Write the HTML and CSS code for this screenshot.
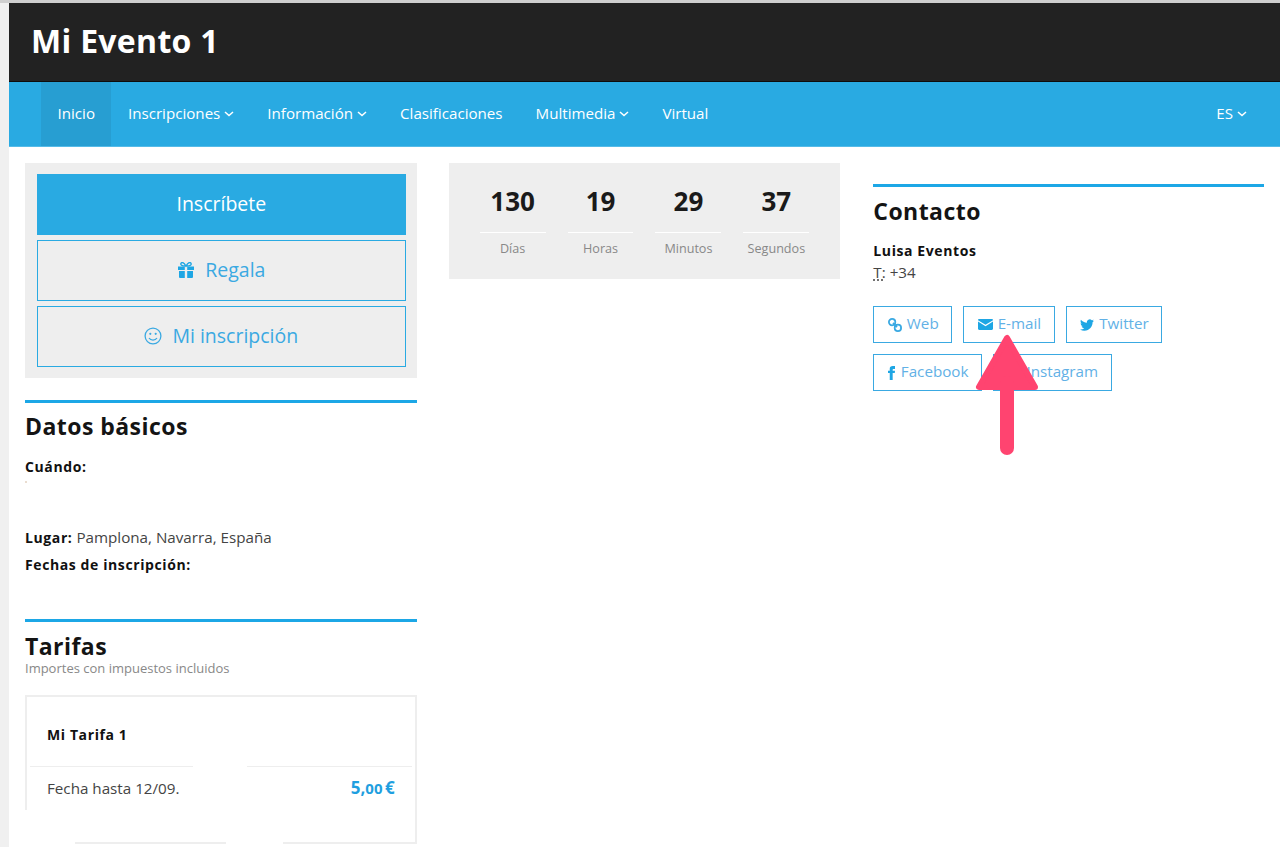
FILE: index.html
```html
<!DOCTYPE html>
<html lang="es">
<head>
<meta charset="utf-8">
<title>Mi Evento 1</title>
<link rel="stylesheet" href="styles.css">
</head>
<body>
<div class="page">
  <header class="masthead"><h1>Mi Evento 1</h1></header>
  <nav class="nav">
    <a class="nav-item active">Inicio</a>
    <a class="nav-item">Inscripciones<svg class="chev" viewBox="0 0 10 6"><path d="M1 1l4 3.6L9 1"/></svg></a>
    <a class="nav-item">Información<svg class="chev" viewBox="0 0 10 6"><path d="M1 1l4 3.6L9 1"/></svg></a>
    <a class="nav-item">Clasificaciones</a>
    <a class="nav-item">Multimedia<svg class="chev" viewBox="0 0 10 6"><path d="M1 1l4 3.6L9 1"/></svg></a>
    <a class="nav-item">Virtual</a>
    <a class="nav-item lang">ES<svg class="chev" viewBox="0 0 10 6"><path d="M1 1l4 3.6L9 1"/></svg></a>
  </nav>
  <main class="columns">
    <div class="col">
      <div class="actions">
        <a class="action primary">Inscríbete</a>
        <a class="action"><svg class="action-icon" viewBox="0 0 18 16"><path d="M1 4.500h6.800V8H1zM10.200 4.500H17V8h-6.800zM2 9h5.800v7H3a1 1 0 0 1-1-1zM10.200 9H16v6a1 1 0 0 1-1 1h-4.800z"/><path d="M9 4C7 .6 5.800.3 4.800.6 3.600 1 3.500 2.600 4.500 3.300 5.300 3.900 7 4 9 4c2 0 3.700-.1 4.500-.7 1-.7.9-2.300-.3-2.700C12.200.3 11 .6 9 4z" class="gift-bow"/></svg>Regala</a>
        <a class="action"><svg class="action-icon smile" viewBox="0 0 18 18"><circle cx="9" cy="9" r="7.900"/><path d="M5 11c1.800 2.700 6.200 2.700 8 0"/><circle class="eye" cx="6.300" cy="6.800" r="1.100"/><circle class="eye" cx="11.700" cy="6.800" r="1.100"/></svg>Mi inscripción</a>
      </div>
      <section class="block basics">
        <h2>Datos básicos</h2>
        <p class="when"><b>Cuándo:</b><i class="speck"></i></p>
        <p class="place"><b>Lugar:</b> Pamplona, Navarra, España</p>
        <p class="dates"><b>Fechas de inscripción:</b></p>
      </section>
      <section class="block rates">
        <h2>Tarifas</h2>
        <p class="note">Importes con impuestos incluidos</p>
        <div class="card">
          <div class="card-title">Mi Tarifa 1</div>
          <div class="card-row"><span>Fecha hasta 12/09.</span><span class="price">5,<small>00</small> €</span></div>
          <i class="mask mask-line"></i>
          <i class="mask mask-side"></i>
          <i class="mask mask-foot-a"></i>
          <i class="mask mask-foot-b"></i>
        </div>
      </section>
    </div>
    <div class="col">
      <div class="countdown">
        <div class="unit"><strong>130</strong><span>Días</span></div>
        <div class="unit"><strong>19</strong><span>Horas</span></div>
        <div class="unit"><strong>29</strong><span>Minutos</span></div>
        <div class="unit"><strong>37</strong><span>Segundos</span></div>
      </div>
    </div>
    <div class="col contact-col">
      <section class="block contact">
        <h2>Contacto</h2>
        <p class="org"><b>Luisa Eventos</b></p>
        <p class="phone"><abbr>T:</abbr> +34</p>
        <div class="links">
          <a class="link"><svg class="link-icon" viewBox="0 0 14 14"><g class="chain"><rect x="0.900" y="0.900" width="6.400" height="6.400" rx="3.200"/><rect x="6.700" y="6.700" width="6.400" height="6.400" rx="3.200"/><path d="M5 5l4 4"/></g></svg>Web</a>
          <a class="link"><svg class="link-icon mail" viewBox="0 0 14 11" preserveAspectRatio="none"><path d="M0 2.600V9.800C0 10.500.5 11 1.200 11h11.600c.7 0 1.200-.5 1.200-1.200V2.600L7 7.200zM1.200 0C.4 0 0 .5 0 1.200L7 5.800l7-4.600C14 .5 13.600 0 12.800 0z"/></svg>E-mail</a>
          <a class="link"><svg class="link-icon" viewBox="0 0 24 24"><path d="M23.953 4.570a10 10 0 0 1-2.825.775 4.958 4.958 0 0 0 2.163-2.723c-.951.555-2.005.959-3.127 1.184a4.920 4.920 0 0 0-8.384 4.482C7.690 8.095 4.067 6.130 1.640 3.162a4.822 4.822 0 0 0-.666 2.475c0 1.710.870 3.213 2.188 4.096a4.904 4.904 0 0 1-2.228-.616v.06a4.923 4.923 0 0 0 3.946 4.827 4.996 4.996 0 0 1-2.212.085 4.936 4.936 0 0 0 4.604 3.417 9.867 9.867 0 0 1-6.102 2.105c-.39 0-.779-.023-1.170-.067a13.995 13.995 0 0 0 7.557 2.209c9.053 0 13.998-7.496 13.998-13.985 0-.21 0-.42-.015-.63A9.935 9.935 0 0 0 24 4.590z"/></svg>Twitter</a>
          <a class="link"><svg class="link-icon fb" viewBox="6 0 12 24"><path d="M9 8H6v4h3v12h5V12h3.642L18 8h-4V6.333C14 5.378 14.192 5 15.115 5H18V0h-3.808C10.596 0 9 1.583 9 4.615V8z"/></svg>Facebook</a>
          <a class="link"><svg class="link-icon" viewBox="0 0 14 14"><rect x="1" y="1" width="12" height="12" rx="3" class="ig"/></svg>Instagram</a>
        </div>
      </section>
    </div>
  </main>
</div>
<svg class="arrow" viewBox="0 0 66 122" aria-hidden="true"><path d="M32 5L4 54h56z" class="arrow-head"/><path d="M32 50v65" class="arrow-shaft"/></svg>
</body>
</html>
```
FILE: styles.css
```css
* { box-sizing: border-box; }
html, body { margin: 0; height: 847px; overflow: hidden; }
body {
  position: relative;
  background: #f0f0f0;
  border-top: 3px solid #cfcfcf;
  padding-left: 9px;
  font-family: "Open Sans", "Noto Sans", sans-serif;
  font-size: 15.200px;
  line-height: 20px;
  color: #444;
}
.page { background: #fff; height: 844px; overflow: hidden; }
p { margin: 0; }
b { color: #111; font-weight: 700; font-size: 14px; letter-spacing: .6px; }

.masthead { height: 79px; background: #222; border-bottom: 1px solid #0d0d0d; padding: 0 22px; display: flex; align-items: center; }
.masthead h1 { margin: 0 0 2px; font-size: 32px; line-height: 40px; font-weight: 700; color: #fff; letter-spacing: .3px; }

.nav { height: 65px; background: #29aae2; border-bottom: 1px solid #55bbe8; padding: 0 32px; display: flex; }
.nav-item { display: flex; align-items: center; padding: 0 16.500px 2px; color: #fff; font-size: 15.130px; }
.nav-item.active { background: #279ed2; }
.nav-item.lang { margin-left: auto; padding-right: 1px; }
.chev { width: 10px; height: 6px; margin-left: 4px; margin-top: 1px; fill: none; stroke: #fff; stroke-width: 1.500; }

.columns { display: grid; grid-template-columns: repeat(3, 1fr); column-gap: 32px; padding: 16px 16px 0; }
.col { min-width: 0; }

.actions { background: #eee; padding: 11px 11px 11px 12px; display: flex; flex-direction: column; gap: 5px; }
.action { height: 61px; padding-bottom: 2px; display: flex; align-items: center; justify-content: center; border: 1px solid #29aae2; color: #3aa9e2; font-size: 19.500px; }
.action.primary { background: #29aae2; color: #fff; }
.action-icon { width: 18px; height: 16px; margin-right: 10px; fill: #1ea6e4; }
.gift-bow { fill: none; stroke: #1ea6e4; stroke-width: 1.400; }
.smile { height: 18px; fill: none; stroke: #3aa9e2; stroke-width: 1.300; }
.smile .eye { fill: #3aa9e2; stroke: none; }

.block { border-top: 3px solid #1ca7e6; }
.block h2 { margin: 0; font-size: 23px; line-height: 30px; font-weight: 700; color: #141414; letter-spacing: .45px; }
.basics { margin-top: 22px; height: 219px; padding-top: 8px; }
.when { position: relative; margin-top: 15px; height: 71px; }
.speck { position: absolute; left: 0; top: 25px; width: 2px; height: 2px; background: #eaddd0; }
.place { height: 27px; }
.rates { padding-top: 9px; }
.note { font-size: 13px; line-height: 16px; color: #888; margin-top: -1px; }

.card { position: relative; margin-top: 19px; height: 149px; border: 2px solid #eee; }
.card-title { height: 70px; display: flex; align-items: center; padding: 6px 0 0 17px; font-size: 14px; letter-spacing: .6px; font-weight: 700; color: #111; border-bottom: 1px solid #eee; margin: 0 3px; }
.card-row { display: flex; justify-content: space-between; padding: 11px 20px 0; }
.price { font-size: 17px; font-weight: 700; color: #1f9fe0; word-spacing: -2px; }
.price small { font-size: 15px; }
.mask { position: absolute; background: #fff; display: block; }
.mask-line { left: 166px; top: 66px; width: 54px; height: 6px; }
.mask-side { left: -2px; top: 113px; width: 2px; height: 34px; }
.mask-foot-a { left: -2px; bottom: -2px; width: 50px; height: 2px; }
.mask-foot-b { left: 199px; bottom: -2px; width: 57px; height: 2px; }

.countdown { background: #eee; height: 116px; padding: 20px 31px 0; display: grid; grid-template-columns: repeat(4, 1fr); column-gap: 22px; align-content: start; }
.unit strong { display: block; height: 50px; padding-top: 1px; text-align: center; font-size: 26px; line-height: 34px; color: #1a1a1a; border-bottom: 1px solid #fff; }
.unit span { display: block; text-align: center; font-size: 12.600px; line-height: 16px; margin-top: 8px; color: #888; }

.contact-col { padding: 21px 0 0 1px; }
.contact { padding-top: 9px; }
.org { margin-top: 14px; line-height: 21px; }
.phone { line-height: 22px; }
abbr { text-decoration: underline dotted; text-underline-offset: 2px; }
.links { margin-top: 23px; display: flex; flex-wrap: wrap; gap: 11px; max-width: 300px; }
.link { height: 37px; padding: 0 12.500px 4px 13.500px; display: flex; align-items: center; border: 1px solid #3aa9e2; color: #62b1e6; background: #fff; }
.link-icon { width: 14px; height: 14px; margin-right: 5px; margin-top: 4px; fill: #1ea6e4; }
.link-icon.mail { width: 15px; height: 11px; }
.link-icon.fb { width: 7px; height: 14px; margin-right: 6px; }
.chain { fill: none; stroke: #3aa9e2; stroke-width: 1.800; }
.ig { fill: #1ea6e4; }

.arrow { position: absolute; left: 975px; top: 330px; width: 66px; height: 122px; }
.arrow-head { fill: #ff4470; stroke: #ff4470; stroke-width: 6px; stroke-linejoin: round; }
.arrow-shaft { fill: none; stroke: #ff4470; stroke-width: 14px; stroke-linecap: round; }
```
